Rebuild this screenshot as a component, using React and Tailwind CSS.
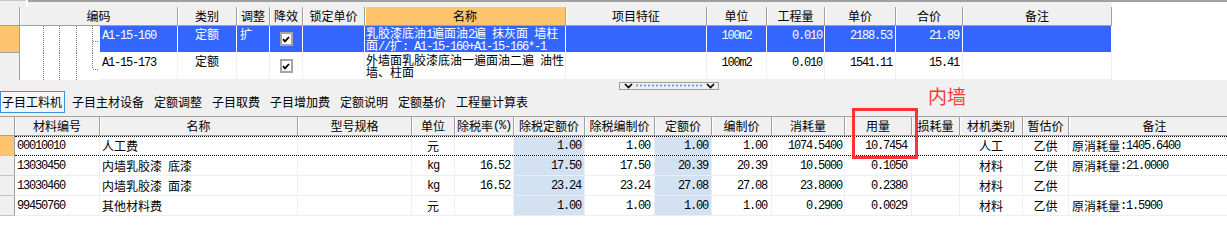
const topCols = [
  { w: "w-[158px]", label: "编码" },
  { w: "w-[59px]", label: "类别" },
  { w: "w-[33px]", label: "调整" },
  { w: "w-[33px]", label: "降效" },
  { w: "w-[62px]", label: "锁定单价" },
  { w: "w-[201px]", label: "名称", hot: true },
  { w: "w-[141px]", label: "项目特征" },
  { w: "w-[60px]", label: "单位" },
  { w: "w-[58px]", label: "工程量" },
  { w: "w-[71px]", label: "单价" },
  { w: "w-[67px]", label: "合价" },
  { w: "w-[149px]", label: "备注" },
];

const botCols = [
  { w: "w-[85px]", label: "材料编号" },
  { w: "w-[198px]", label: "名称" },
  { w: "w-[114px]", label: "型号规格" },
  { w: "w-[43px]", label: "单位" },
  { w: "w-[59px]", label: "除税率(%)" },
  { w: "w-[71px]", label: "除税定额价" },
  { w: "w-[70px]", label: "除税编制价" },
  { w: "w-[57px]", label: "定额价" },
  { w: "w-[60px]", label: "编制价" },
  { w: "w-[73px]", label: "消耗量" },
  { w: "w-[67px]", label: "用量" },
  { w: "w-[48px]", label: "损耗量" },
  { w: "w-[63px]", label: "材机类别" },
  { w: "w-[46px]", label: "暂估价" },
  { w: "w-[172px]", label: "备注" },
];

const materials = [
  { code: "00010010", name: "人工费", unit: "元", rate: "", p1: "1.00", p2: "1.00", p3: "1.00", p4: "1.00", xh: "1074.5400", yl: "10.7454", type: "人工", zg: "乙供", note: "原消耗量:1405.6400" },
  { code: "13030450", name: "内墙乳胶漆 底漆", unit: "kg", rate: "16.52", p1: "17.50", p2: "17.50", p3: "20.39", p4: "20.39", xh: "10.5000", yl: "0.1050", type: "材料", zg: "乙供", note: "原消耗量:21.0000" },
  { code: "13030460", name: "内墙乳胶漆 面漆", unit: "kg", rate: "16.52", p1: "23.24", p2: "23.24", p3: "27.08", p4: "27.08", xh: "23.8000", yl: "0.2380", type: "材料", zg: "乙供", note: "" },
  { code: "99450760", name: "其他材料费", unit: "元", rate: "", p1: "1.00", p2: "1.00", p3: "1.00", p4: "1.00", xh: "0.2900", yl: "0.0029", type: "材料", zg: "乙供", note: "原消耗量:1.5900" },
];

const tabs = ["子目主材设备", "定额调整", "子目取费", "子目增加费", "定额说明", "定额基价", "工程量计算表"];

// half-width runs in a narrow mono face, CJK runs in Noto
function Txt({ s, tight }) {
  const parts = s.match(/[\x20-\x7e]+|[^\x20-\x7e]+/g) || [];
  return parts.map((p, i) =>
    /^[\x20-\x7e]/.test(p) ? (
      <span
        key={i}
        className={`font-['Liberation_Mono',monospace] tracking-[-1.2px] whitespace-pre ${tight ? "leading-[8px]" : ""}`}
      >
        {p}
      </span>
    ) : (
      <span key={i}>{p}</span>
    )
  );
}

function Check() {
  return (
    <div className="w-[13px] h-[14px] border-2 border-[#a5a5a5] bg-white flex items-center justify-center">
      <svg width="8" height="7" viewBox="0 0 8 7" className="block">
        <path d="M1 3.2 L3 5.4 L7 1" stroke="#000" strokeWidth="1.8" fill="none" />
      </svg>
    </div>
  );
}

function Tree({ last }) {
  return (
    <div className="w-[80px] shrink-0 h-full bg-white">
      <svg width="80" height="27" className="block">
        <g stroke="#7a7a7a" strokeDasharray="1 1" shapeRendering="crispEdges">
          <line x1="23.5" y1="0" x2="23.5" y2="27" />
          <line x1="39.5" y1="0" x2="39.5" y2="27" />
          <line x1="56.5" y1="0" x2="56.5" y2="27" />
          <line x1="72.5" y1="0" x2="72.5" y2={last ? 16 : 27} />
          <line x1="73" y1={last ? 16.5 : 15.5} x2="79" y2={last ? 16.5 : 15.5} />
        </g>
      </svg>
    </div>
  );
}

function TopTable() {
  const sel = "shrink-0 h-full overflow-hidden border-r border-b border-white bg-[#3366ff] text-white";
  const norm = "shrink-0 h-full overflow-hidden border-r border-b border-[#eef0f6] bg-white";
  return (
    <div>
      <div className="flex h-[19px]">
        <div className="w-[20px] shrink-0 bg-[#f0f0f0] border-r border-b border-[#a0a0a0]" />
        {topCols.map((c) => (
          <div
            key={c.label}
            className={`${c.w} shrink-0 flex items-center justify-center border-r border-b border-[#a0a0a0] shadow-[inset_1px_0_0_#ffffff] ${c.hot ? "bg-[#ffc46e]" : "bg-[#f0f0f0]"}`}
          >
            {c.label}
          </div>
        ))}
      </div>

      <div className="flex h-[27px]">
        <div className="w-[20px] shrink-0 bg-[#ffc46e] border-r border-b border-[#a0a0a0]" />
        <Tree />
        <div className={`${sel} w-[78px] pl-[2px] pt-[2px]`}><Txt s="A1-15-160" tight /></div>
        <div className={`${sel} w-[59px] text-center pt-[2px]`}>定额</div>
        <div className={`${sel} w-[33px] pl-[3px] pt-[2px]`}>扩</div>
        <div className={`${sel} w-[33px] flex items-center justify-center`}><Check /></div>
        <div className={`${sel} w-[62px]`} />
        <div className={`${sel} w-[201px] pl-[1px] pt-[1px] whitespace-nowrap`}>
          <div className="h-[12px] leading-[12px]"><Txt s="乳胶漆底油1遍面油2遍 抹灰面 墙柱" tight /></div>
          <div className="h-[12px] leading-[12px]"><Txt s="面//扩: A1-15-160+A1-15-166*-1" tight /></div>
        </div>
        <div className={`${sel} w-[141px]`} />
        <div className={`${sel} w-[60px] text-center pt-[2px]`}><Txt s="100m2" tight /></div>
        <div className={`${sel} w-[58px] text-right pr-[2px] pt-[2px]`}><Txt s="0.010" tight /></div>
        <div className={`${sel} w-[71px] text-right pr-[3px] pt-[2px]`}><Txt s="2188.53" tight /></div>
        <div className={`${sel} w-[67px] text-right pr-[3px] pt-[2px]`}><Txt s="21.89" tight /></div>
        <div className={`${sel} w-[149px]`} />
      </div>

      <div className="flex h-[27px]">
        <div className="w-[20px] shrink-0 bg-[#f0f0f0] border-r border-[#a0a0a0]" />
        <Tree last />
        <div className={`${norm} w-[78px] pl-[2px] pt-[2px]`}><Txt s="A1-15-173" tight /></div>
        <div className={`${norm} w-[59px] text-center pt-[2px]`}>定额</div>
        <div className={`${norm} w-[33px]`} />
        <div className={`${norm} w-[33px] flex items-center justify-center`}><Check /></div>
        <div className={`${norm} w-[62px]`} />
        <div className={`${norm} w-[201px] pl-[1px] pt-[1px] whitespace-nowrap`}>
          <div className="h-[12px] leading-[12px]"><Txt s="外墙面乳胶漆底油一遍面油二遍 油性" tight /></div>
          <div className="h-[12px] leading-[12px]">墙、柱面</div>
        </div>
        <div className={`${norm} w-[141px]`} />
        <div className={`${norm} w-[60px] text-center pt-[2px]`}><Txt s="100m2" tight /></div>
        <div className={`${norm} w-[58px] text-right pr-[2px] pt-[2px]`}><Txt s="0.010" tight /></div>
        <div className={`${norm} w-[71px] text-right pr-[3px] pt-[2px]`}><Txt s="1541.11" tight /></div>
        <div className={`${norm} w-[67px] text-right pr-[3px] pt-[2px]`}><Txt s="15.41" tight /></div>
        <div className={`${norm} w-[149px]`} />
      </div>
    </div>
  );
}

function Splitter() {
  return (
    <div className="h-[11px] bg-[#f0f0f0] flex">
      <div className="ml-[619px] mt-[2px] w-[100px] h-[8px] border border-[#a0a0a0] bg-[#f0f0f0]">
        <svg width="98" height="6" className="block">
          <path d="M5 1 L8.5 4.5 L12 1" stroke="#000" strokeWidth="1.6" fill="none" />
          <line x1="16" y1="2.5" x2="84" y2="2.5" stroke="#6f9fe4" strokeWidth="2" strokeDasharray="2 2" />
          <path d="M87 1 L90.5 4.5 L94 1" stroke="#000" strokeWidth="1.6" fill="none" />
        </svg>
      </div>
    </div>
  );
}

function Tabs() {
  return (
    <div className="h-[22px] bg-[#f0f0f0] flex items-stretch">
      <div className="border border-[#3c8ee2] pl-[1px] pr-[2px] flex items-center bg-[#f4f6f9]">子目工料机</div>
      <div className="ml-[7px] flex items-center gap-[10px]">
        {tabs.map((t) => (
          <div key={t}>{t}</div>
        ))}
      </div>
    </div>
  );
}

function BottomTable() {
  const cell = "shrink-0 h-full flex items-center overflow-hidden whitespace-nowrap border-r border-[#eceef7]";
  return (
    <div>
      <div className="flex h-[20px] border-t border-[#a0a0a0]">
        <div className="w-[15px] shrink-0 bg-[#f0f0f0] border-r border-b border-[#a0a0a0]" />
        {botCols.map((c) => (
          <div
            key={c.label + c.w}
            className={`${c.w} shrink-0 flex items-center justify-center whitespace-nowrap overflow-hidden bg-[#f0f0f0] border-r border-b border-[#a0a0a0] shadow-[inset_1px_0_0_#ffffff]`}
          >
            <Txt s={c.label} />
          </div>
        ))}
      </div>
      {materials.map((r, i) => (
        <div key={r.code} className="flex h-[20px]">
          <div
            className={`w-[15px] shrink-0 border-r border-b border-r-[#a0a0a0] border-b-[#c4c4c4] ${i === 0 ? "bg-[#ffc46e]" : "bg-[#f0f0f0]"}`}
          />
          <div
            className={`flex h-full ${i === 0 ? "border-y border-dotted border-black" : "border-b border-[#eceef7]"}`}
          >
            <div className={`${cell} w-[85px] pl-[2px]`}><Txt s={r.code} /></div>
            <div className={`${cell} w-[198px] pl-[2px]`}><Txt s={r.name} /></div>
            <div className={`${cell} w-[114px]`} />
            <div className={`${cell} w-[43px] justify-center`}><Txt s={r.unit} /></div>
            <div className={`${cell} w-[59px] justify-end pr-[3px]`}><Txt s={r.rate} /></div>
            <div className={`${cell} w-[71px] justify-end pr-[3px] bg-[#d3e2f2]`}><Txt s={r.p1} /></div>
            <div className={`${cell} w-[70px] justify-end pr-[4px]`}><Txt s={r.p2} /></div>
            <div className={`${cell} w-[57px] justify-end pr-[3px] bg-[#d3e2f2]`}><Txt s={r.p3} /></div>
            <div className={`${cell} w-[60px] justify-end pr-[4px]`}><Txt s={r.p4} /></div>
            <div className={`${cell} w-[73px] justify-end pr-[2px]`}><Txt s={r.xh} /></div>
            <div className={`${cell} w-[67px] justify-end pr-[4px]`}><Txt s={r.yl} /></div>
            <div className={`${cell} w-[48px]`} />
            <div className={`${cell} w-[63px] justify-center`}>{r.type}</div>
            <div className={`${cell} w-[46px] justify-center`}>{r.zg}</div>
            <div className={`${cell} w-[172px] pl-[3px]`}><Txt s={r.note} /></div>
          </div>
        </div>
      ))}
    </div>
  );
}

export default function App() {
  return (
    <div className="relative w-[1227px] h-[245px] overflow-hidden bg-white text-black text-[12px] leading-[12px] font-['Noto_Sans_CJK_SC',sans-serif]">
      <div className="h-[7px] flex">
        <div className="w-[26px] bg-[#f0f0f0] border-t border-[#c8c8c8]" />
        <div className="w-[2px] bg-white" />
        <div className="w-[1084px] bg-[#f0f0f0] border-t-2 border-[#a0a0a0]" />
        <div className="flex-1 border-t-2 border-[#a0a0a0]" />
      </div>
      <TopTable />
      <Splitter />
      <Tabs />
      <div className="h-[3px] bg-[#f0f0f0]" />
      <BottomTable />

      {/* annotation */}
      <div className="absolute left-[928px] top-[86px] text-[19px] leading-[19px] text-[#f23c3c]">内墙</div>
      <div className="absolute left-[852px] top-[108px] w-[66px] h-[51px] border-[3px] border-[#ff3333]" />
    </div>
  );
}
